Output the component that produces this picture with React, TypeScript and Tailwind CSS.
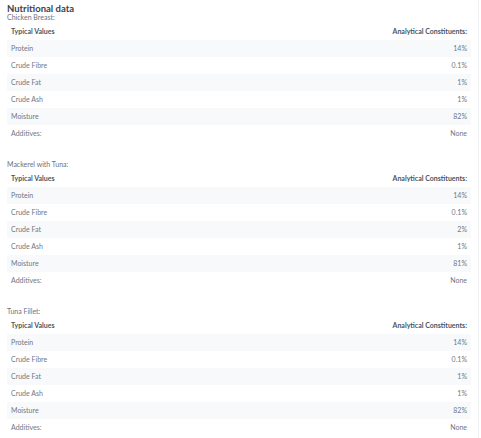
import React from 'react';

const sections = [
  { name: 'Chicken Breast:', values: ['14%', '0.1%', '1%', '1%', '82%', 'None'], gap: 'mt-0' },
  { name: 'Mackerel with Tuna:', values: ['14%', '0.1%', '2%', '1%', '81%', 'None'], gap: 'mt-[18px]' },
  { name: 'Tuna Fillet:', values: ['14%', '0.1%', '1%', '1%', '82%', 'None'], gap: 'mt-[18px]' },
];

const labels = ['Protein', 'Crude Fibre', 'Crude Fat', 'Crude Ash', 'Moisture', 'Additives:'];

const NutritionTable = ({ name, values, gap }: { name: string; values: string[]; gap: string }) => (
  <div className={gap}>
    <div className="h-[9px] leading-[9px] text-[7px] text-[#6b7280]">{name}</div>
    <div className="w-[464px]">
      <div className="flex justify-between items-center h-[18px] px-[4px] text-[7px] font-bold text-[#4b5563]">
        <span>Typical Values</span>
        <span>Analytical Constituents:</span>
      </div>
      {labels.map((label, i) => (
        <div
          key={label}
          className={`flex justify-between items-center h-[17px] px-[4px] text-[7px] text-[#707783] ${i % 2 === 0 ? 'bg-[#f8f9fa]' : 'bg-white'}`}
        >
          <span>{label}</span>
          <span>{values[i]}</span>
        </div>
      ))}
    </div>
  </div>
);

export default function App() {
  return (
    <div className="w-[479px] h-[438px] bg-white border-r border-[#eef0f3] pl-[7px] pt-[4px]" style={{ fontFamily: 'Lato, "Open Sans", sans-serif' }}>
      <div className="h-[9px] leading-[9px] text-[9.5px] font-bold text-[#374151]">Nutritional data</div>
      {sections.map((s) => (
        <NutritionTable key={s.name} name={s.name} values={s.values} gap={s.gap} />
      ))}
    </div>
  );
}
